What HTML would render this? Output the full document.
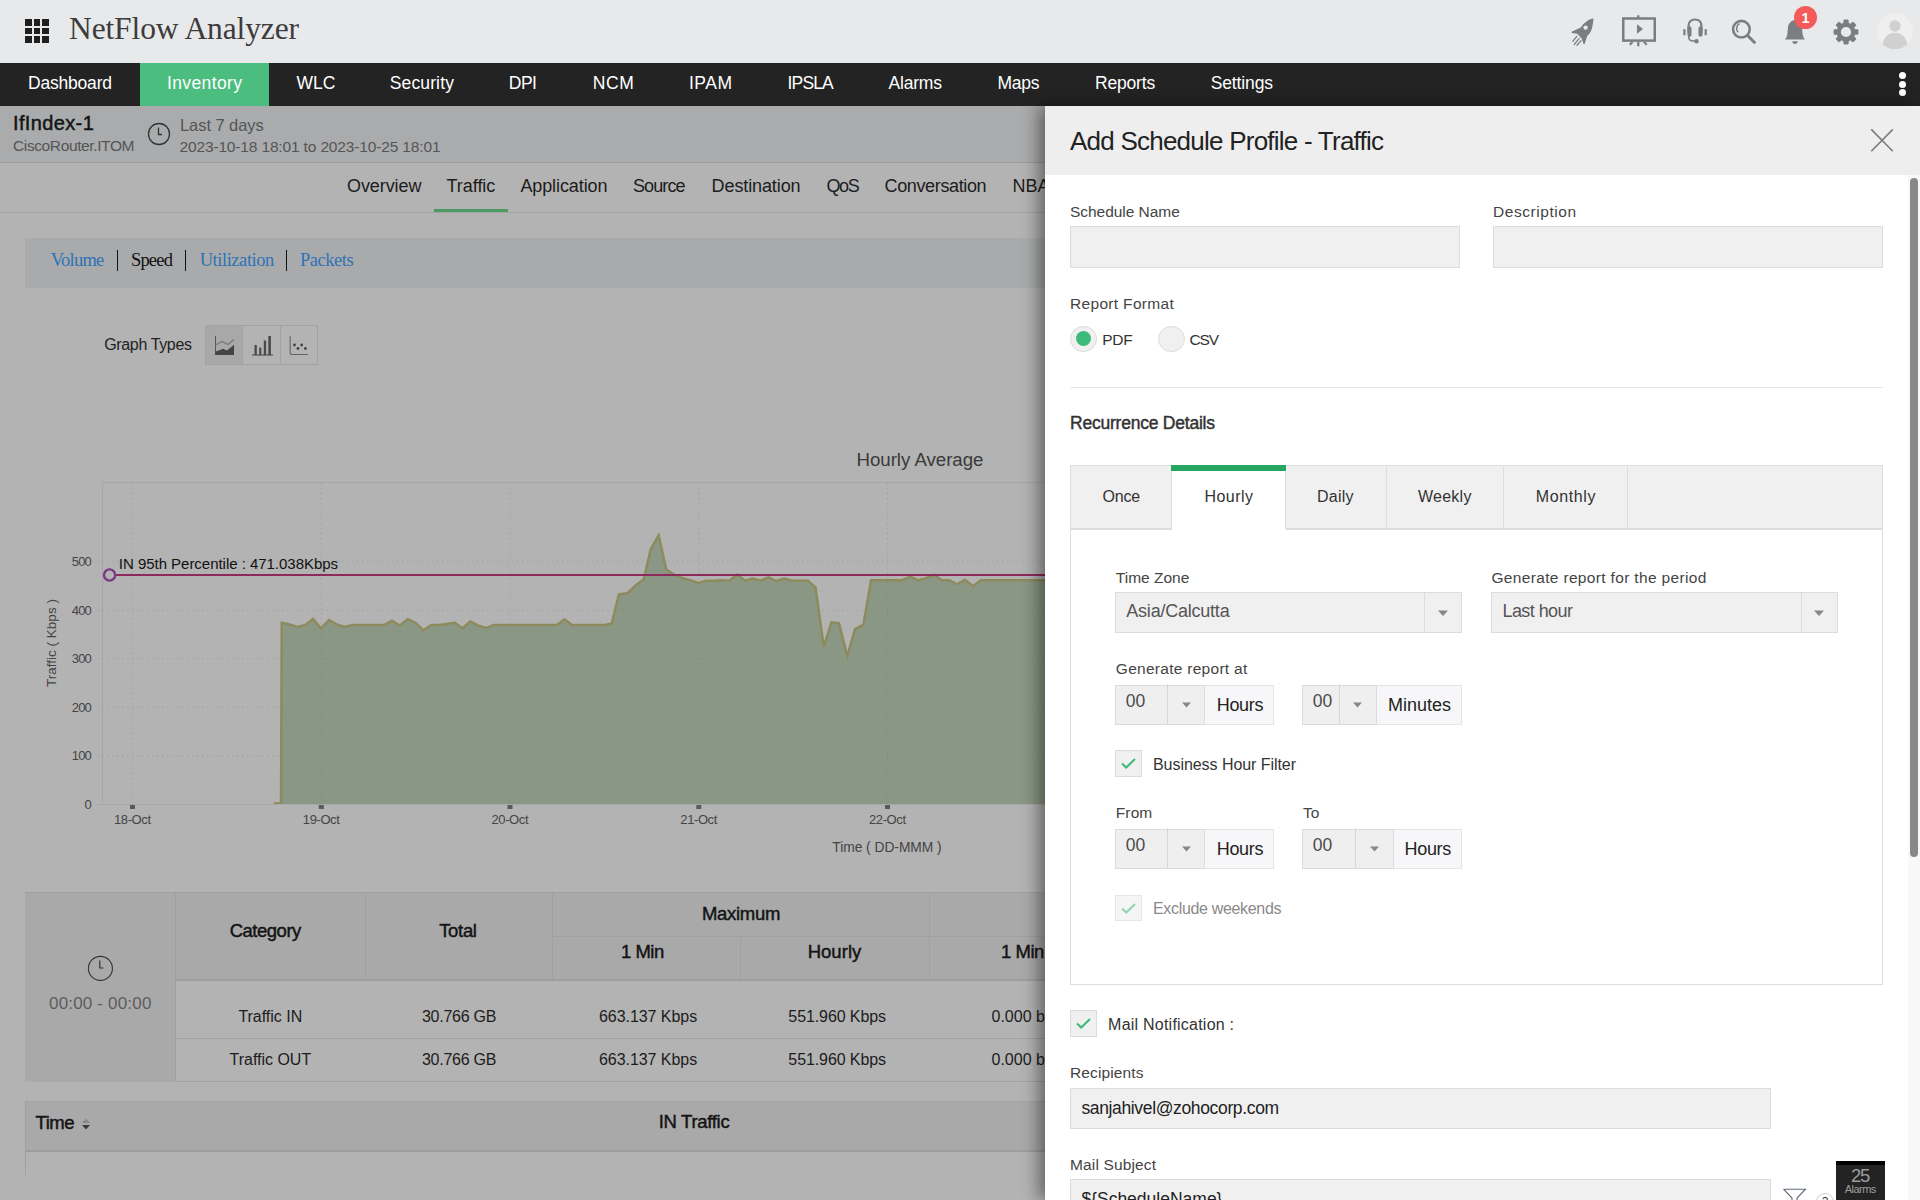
<!DOCTYPE html>
<html><head><meta charset="utf-8"><title>NetFlow Analyzer</title>
<style>
html,body{margin:0;padding:0;width:1920px;height:1200px;overflow:hidden;background:#b3b3b3;}
body{position:relative;font-family:"Liberation Sans", sans-serif;}
.t{position:absolute;white-space:nowrap;line-height:1;}
.r{position:absolute;box-sizing:border-box;}
</style></head><body>
<div class="r" style="left:0px;top:0px;width:1920px;height:63px;background:#e8e9eb;"></div>
<div class="r" style="left:25.0px;top:19.0px;width:6.600000000000001px;height:6.600000000000001px;background:#1f1f1f;"></div>
<div class="r" style="left:25.0px;top:27.6px;width:6.600000000000001px;height:6.600000000000001px;background:#1f1f1f;"></div>
<div class="r" style="left:25.0px;top:36.2px;width:6.600000000000001px;height:6.600000000000001px;background:#1f1f1f;"></div>
<div class="r" style="left:33.6px;top:19.0px;width:6.600000000000001px;height:6.600000000000001px;background:#1f1f1f;"></div>
<div class="r" style="left:33.6px;top:27.6px;width:6.600000000000001px;height:6.600000000000001px;background:#1f1f1f;"></div>
<div class="r" style="left:33.6px;top:36.2px;width:6.600000000000001px;height:6.600000000000001px;background:#1f1f1f;"></div>
<div class="r" style="left:42.2px;top:19.0px;width:6.600000000000001px;height:6.600000000000001px;background:#1f1f1f;"></div>
<div class="r" style="left:42.2px;top:27.6px;width:6.600000000000001px;height:6.600000000000001px;background:#1f1f1f;"></div>
<div class="r" style="left:42.2px;top:36.2px;width:6.600000000000001px;height:6.600000000000001px;background:#1f1f1f;"></div>
<div class="t" style="left:69.00px;top:13.42px;font-size:31.5px;color:#3c3c3c;font-family:'Liberation Serif', serif;letter-spacing:-0.120px;">NetFlow Analyzer</div>
<div class="r" style="left:0px;top:63px;width:1920px;height:43px;background:#232323;"></div>
<div class="r" style="left:140px;top:63px;width:129px;height:43px;background:#4bbd7f;"></div>
<div class="t" style="left:28.00px;top:74.98px;font-size:17.5px;color:#ffffff;letter-spacing:-0.200px;">Dashboard</div>
<div class="t" style="left:167.00px;top:74.98px;font-size:17.5px;color:#ffffff;letter-spacing:0.375px;">Inventory</div>
<div class="t" style="left:296.50px;top:74.98px;font-size:17.5px;color:#ffffff;letter-spacing:0.050px;">WLC</div>
<div class="t" style="left:389.70px;top:74.98px;font-size:17.5px;color:#ffffff;letter-spacing:0.143px;">Security</div>
<div class="t" style="left:508.70px;top:74.98px;font-size:17.5px;color:#ffffff;letter-spacing:-0.450px;">DPI</div>
<div class="t" style="left:592.80px;top:74.98px;font-size:17.5px;color:#ffffff;letter-spacing:0.650px;">NCM</div>
<div class="t" style="left:689.00px;top:74.98px;font-size:17.5px;color:#ffffff;letter-spacing:0.500px;">IPAM</div>
<div class="t" style="left:787.60px;top:74.98px;font-size:17.5px;color:#ffffff;letter-spacing:-0.875px;">IPSLA</div>
<div class="t" style="left:888.40px;top:74.98px;font-size:17.5px;color:#ffffff;letter-spacing:-0.160px;">Alarms</div>
<div class="t" style="left:997.50px;top:74.98px;font-size:17.5px;color:#ffffff;letter-spacing:-0.267px;">Maps</div>
<div class="t" style="left:1095.00px;top:74.98px;font-size:17.5px;color:#ffffff;letter-spacing:-0.183px;">Reports</div>
<div class="t" style="left:1210.70px;top:74.98px;font-size:17.5px;color:#ffffff;letter-spacing:-0.129px;">Settings</div>
<div class="r" style="left:1899.3000000000002px;top:72.30000000000001px;width:7.2px;height:7.2px;border-radius:50%;background:#fff"></div>
<div class="r" style="left:1899.3000000000002px;top:80.5px;width:7.2px;height:7.2px;border-radius:50%;background:#fff"></div>
<div class="r" style="left:1899.3000000000002px;top:89.10000000000001px;width:7.2px;height:7.2px;border-radius:50%;background:#fff"></div>
<div class="r" style="left:0px;top:106px;width:1045px;height:1094px;background:#b3b3b3;"></div>
<div class="r" style="left:0px;top:106px;width:1045px;height:56px;background:#aaabac;"></div>
<div class="r" style="left:0px;top:162px;width:1045px;height:1px;background:#9c9c9c;"></div>
<div class="r" style="left:0px;top:211.5px;width:1045px;height:1.0px;background:#a3a3a3;"></div>
<div class="t" style="left:13.00px;top:113.07px;font-size:20px;color:#141414;-webkit-text-stroke:0.45px #141414;letter-spacing:0.369px;">IfIndex-1</div>
<div class="t" style="left:13.00px;top:138.13px;font-size:15.5px;color:#555;letter-spacing:-0.380px;">CiscoRouter.ITOM</div>
<svg class="r" style="left:147px;top:122px;" width="24" height="24" viewBox="0 0 24 24"><circle cx="12" cy="12" r="10.5" fill="none" stroke="#333" stroke-width="1.3"/><path d="M11.5 5.5 V12.5 H15" fill="none" stroke="#333" stroke-width="1.3"/></svg>
<div class="t" style="left:180.00px;top:116.78px;font-size:16.5px;color:#555;letter-spacing:-0.065px;">Last 7 days</div>
<div class="t" style="left:179.50px;top:138.63px;font-size:15.5px;color:#555;letter-spacing:-0.151px;">2023-10-18 18:01 to 2023-10-25 18:01</div>
<div class="t" style="left:347.00px;top:176.56px;font-size:18px;color:#1c1c1c;letter-spacing:-0.086px;">Overview</div>
<div class="t" style="left:446.60px;top:176.56px;font-size:18px;color:#1c1c1c;letter-spacing:-0.050px;">Traffic</div>
<div class="t" style="left:520.40px;top:176.56px;font-size:18px;color:#1c1c1c;letter-spacing:-0.100px;">Application</div>
<div class="t" style="left:632.90px;top:176.56px;font-size:18px;color:#1c1c1c;letter-spacing:-0.880px;">Source</div>
<div class="t" style="left:711.60px;top:176.56px;font-size:18px;color:#1c1c1c;letter-spacing:-0.110px;">Destination</div>
<div class="t" style="left:826.50px;top:176.56px;font-size:18px;color:#1c1c1c;letter-spacing:-1.400px;">QoS</div>
<div class="t" style="left:884.60px;top:176.56px;font-size:18px;color:#1c1c1c;letter-spacing:-0.373px;">Conversation</div>
<div class="t" style="left:1012.50px;top:176.56px;font-size:18px;color:#1c1c1c;">NBA</div>
<div class="r" style="left:434px;top:209px;width:74px;height:3px;background:#4a9a62;"></div>
<div class="r" style="left:25px;top:238px;width:1020px;height:50px;background:#a9aaab;"></div>
<div class="t" style="left:50.70px;top:250.61px;font-size:18.5px;color:#2f73b6;font-family:'Liberation Serif', serif;letter-spacing:-0.720px;">Volume</div>
<div class="r" style="left:117px;top:250px;width:1.2000000000000028px;height:21px;background:#111;"></div>
<div class="t" style="left:130.90px;top:250.61px;font-size:18.5px;color:#111;font-family:'Liberation Serif', serif;letter-spacing:-0.800px;">Speed</div>
<div class="r" style="left:185.2px;top:250px;width:1.200000000000017px;height:21px;background:#111;"></div>
<div class="t" style="left:199.70px;top:250.61px;font-size:18.5px;color:#2f73b6;font-family:'Liberation Serif', serif;letter-spacing:-0.450px;">Utilization</div>
<div class="r" style="left:286px;top:250px;width:1.1999999999999886px;height:21px;background:#111;"></div>
<div class="t" style="left:300.00px;top:250.61px;font-size:18.5px;color:#2f73b6;font-family:'Liberation Serif', serif;letter-spacing:-0.467px;">Packets</div>
<div class="t" style="left:104.30px;top:336.85px;font-size:16px;color:#222;letter-spacing:-0.370px;">Graph Types</div>
<div class="r" style="left:205px;top:325px;width:113px;height:40px;border:1px solid #a2a2a2;"></div>
<div class="r" style="left:206px;top:326px;width:36.599999999999994px;height:38px;background:#a8a8a8;"></div>
<div class="r" style="left:242px;top:326px;width:1px;height:38px;background:#a2a2a2;"></div>
<div class="r" style="left:280px;top:326px;width:1px;height:38px;background:#a2a2a2;"></div>
<svg class="r" style="left:205px;top:325px;" width="113" height="40" viewBox="0 0 113 40"><path d="M10.5 10.8 V30" stroke="#555" stroke-width="1" fill="none"/><path d="M10.5 20 L17 16.5 L23 19.5 L29 14.5" stroke="#777" stroke-width="1.2" fill="none"/><path d="M10.5 26.5 L15 25 L18 23.8 L22 25.5 L29 19.8 V30 H10.5 Z" fill="#444"/><path d="M47 30 H68" stroke="#555" stroke-width="1.2"/><rect x="49.5" y="20" width="2.3" height="10" fill="#4a4a4a"/><rect x="54.2" y="22.5" width="2.1" height="7.5" fill="#4a4a4a"/><rect x="58.8" y="15.5" width="2.3" height="14.5" fill="#4a4a4a"/><rect x="63.3" y="11" width="2.6" height="19" fill="#4a4a4a"/><path d="M85.2 11 V27.5 Q85.2 29.5 87.2 29.5 H103" stroke="#666" stroke-width="1.1" fill="none"/><circle cx="89.5" cy="20" r="1.4" fill="#444"/><circle cx="93" cy="23.5" r="1.4" fill="#444"/><circle cx="96.7" cy="20" r="1.4" fill="#444"/><circle cx="100.4" cy="23.5" r="1.4" fill="#444"/></svg>
<div class="t" style="left:856.50px;top:450.87px;font-size:18.7px;color:#3a3a3a;letter-spacing:-0.038px;">Hourly Average</div>
<svg class="r" style="left:0px;top:430px;" width="1045" height="440" viewBox="0 0 1045 440"><g transform="translate(0,-430)"><path d="M102.5 804 V482.5 H1045" stroke="#a6a6a6" stroke-width="1" fill="none"/><path d="M97 561.3 H1045" stroke="#a2a2a2" stroke-width="1" stroke-dasharray="1.5 3.5"/><path d="M97 610.3 H1045" stroke="#a2a2a2" stroke-width="1" stroke-dasharray="1.5 3.5"/><path d="M97 658.5 H1045" stroke="#a2a2a2" stroke-width="1" stroke-dasharray="1.5 3.5"/><path d="M97 707.2 H1045" stroke="#a2a2a2" stroke-width="1" stroke-dasharray="1.5 3.5"/><path d="M97 755.8 H1045" stroke="#a2a2a2" stroke-width="1" stroke-dasharray="1.5 3.5"/><path d="M132.5 483 V804" stroke="#a2a2a2" stroke-width="1" stroke-dasharray="1.5 3.5"/><path d="M321.3 483 V804" stroke="#a2a2a2" stroke-width="1" stroke-dasharray="1.5 3.5"/><path d="M510 483 V804" stroke="#a2a2a2" stroke-width="1" stroke-dasharray="1.5 3.5"/><path d="M698.8 483 V804" stroke="#a2a2a2" stroke-width="1" stroke-dasharray="1.5 3.5"/><path d="M887.5 483 V804" stroke="#a2a2a2" stroke-width="1" stroke-dasharray="1.5 3.5"/><path d="M281 804 L281.7 622.7 L289.6 624.5 L297.4 626.8 L305.3 625.0 L313.2 619.0 L321.0 628.5 L328.9 620.0 L336.8 624.4 L344.7 626.8 L352.5 625.0 L360.4 625.0 L368.3 625.0 L376.2 625.0 L384.0 625.0 L391.9 620.6 L399.8 625.6 L407.7 619.2 L415.5 622.7 L423.4 630.3 L431.3 625.0 L439.2 625.0 L447.0 623.9 L454.9 622.7 L462.5 628.2 L470.3 621.5 L478.3 625.6 L486.0 628.0 L493.6 625.0 L556.8 625.0 L564.4 619.2 L572.0 625.0 L604.1 625.0 L611.7 623.6 L618.9 594.4 L627.2 593.3 L635.0 585.9 L643.6 579.5 L650.7 549.2 L658.7 535.2 L666.3 569.6 L674.4 574.8 L682.0 577.8 L690.2 580.1 L698.3 583.0 L706.0 580.7 L713.5 580.7 L721.7 580.1 L729.3 580.7 L737.4 574.6 L745.0 580.7 L752.6 578.6 L760.8 580.7 L768.4 577.4 L776.5 581.0 L784.1 578.6 L792.3 580.7 L808.0 580.7 L815.6 587.7 L823.8 646.6 L831.4 622.3 L839.0 623.1 L847.3 656.0 L855.0 629.1 L863.4 624.6 L871.0 580.3 L901.9 580.3 L910.2 576.5 L918.0 580.3 L925.6 578.4 L934.0 574.6 L941.7 580.3 L949.4 580.3 L957.1 584.2 L964.8 579.7 L973.1 586.1 L980.8 580.3 L1050.0 580.3 L1050 804 Z" fill="#617b55" fill-opacity="0.5"/><path d="M273.7 803.5 L281 803.5 L281.7 622.7 L289.6 624.5 L297.4 626.8 L305.3 625.0 L313.2 619.0 L321.0 628.5 L328.9 620.0 L336.8 624.4 L344.7 626.8 L352.5 625.0 L360.4 625.0 L368.3 625.0 L376.2 625.0 L384.0 625.0 L391.9 620.6 L399.8 625.6 L407.7 619.2 L415.5 622.7 L423.4 630.3 L431.3 625.0 L439.2 625.0 L447.0 623.9 L454.9 622.7 L462.5 628.2 L470.3 621.5 L478.3 625.6 L486.0 628.0 L493.6 625.0 L556.8 625.0 L564.4 619.2 L572.0 625.0 L604.1 625.0 L611.7 623.6 L618.9 594.4 L627.2 593.3 L635.0 585.9 L643.6 579.5 L650.7 549.2 L658.7 535.2 L666.3 569.6 L674.4 574.8 L682.0 577.8 L690.2 580.1 L698.3 583.0 L706.0 580.7 L713.5 580.7 L721.7 580.1 L729.3 580.7 L737.4 574.6 L745.0 580.7 L752.6 578.6 L760.8 580.7 L768.4 577.4 L776.5 581.0 L784.1 578.6 L792.3 580.7 L808.0 580.7 L815.6 587.7 L823.8 646.6 L831.4 622.3 L839.0 623.1 L847.3 656.0 L855.0 629.1 L863.4 624.6 L871.0 580.3 L901.9 580.3 L910.2 576.5 L918.0 580.3 L925.6 578.4 L934.0 574.6 L941.7 580.3 L949.4 580.3 L957.1 584.2 L964.8 579.7 L973.1 586.1 L980.8 580.3 L1050.0 580.3" stroke="#8d8a5b" stroke-width="2.4" fill="none" stroke-linejoin="miter"/><path d="M97 804.5 H1045" stroke="#a8a8a8" stroke-width="1"/><rect x="130.0" y="805" width="5" height="4" fill="#5a5a5a"/><rect x="318.8" y="805" width="5" height="4" fill="#5a5a5a"/><rect x="507.5" y="805" width="5" height="4" fill="#5a5a5a"/><rect x="696.3" y="805" width="5" height="4" fill="#5a5a5a"/><rect x="885.0" y="805" width="5" height="4" fill="#5a5a5a"/><path d="M115 575 H1045" stroke="#8e2a5b" stroke-width="2"/><circle cx="109.6" cy="575" r="5.6" fill="#b3b3b3" stroke="#7d3886" stroke-width="2.4"/></g></svg>
<div class="t" style="left:118.80px;top:556.10px;font-size:15px;color:#111;letter-spacing:-0.029px;">IN 95th Percentile : 471.038Kbps</div>
<div class="t" style="left:71.80px;top:554.99px;font-size:13px;color:#444;letter-spacing:-0.850px;">500</div>
<div class="t" style="left:71.80px;top:603.99px;font-size:13px;color:#444;letter-spacing:-0.850px;">400</div>
<div class="t" style="left:71.80px;top:652.19px;font-size:13px;color:#444;letter-spacing:-0.850px;">300</div>
<div class="t" style="left:71.80px;top:700.89px;font-size:13px;color:#444;letter-spacing:-0.850px;">200</div>
<div class="t" style="left:71.80px;top:749.49px;font-size:13px;color:#444;letter-spacing:-0.850px;">100</div>
<div class="t" style="left:84.60px;top:797.89px;font-size:13px;color:#444;">0</div>
<div class="t" style="left:114.00px;top:813.29px;font-size:13px;color:#444;letter-spacing:-0.400px;">18-Oct</div>
<div class="t" style="left:302.80px;top:813.29px;font-size:13px;color:#444;letter-spacing:-0.400px;">19-Oct</div>
<div class="t" style="left:491.50px;top:813.29px;font-size:13px;color:#444;letter-spacing:-0.400px;">20-Oct</div>
<div class="t" style="left:680.30px;top:813.29px;font-size:13px;color:#444;letter-spacing:-0.400px;">21-Oct</div>
<div class="t" style="left:869.00px;top:813.29px;font-size:13px;color:#444;letter-spacing:-0.400px;">22-Oct</div>
<div class="t" style="left:832.25px;top:840.92px;font-size:13.8px;color:#444;letter-spacing:-0.029px;">Time ( DD-MMM )</div>
<div class="t" style="left:51.5px;top:643px;font-size:13.5px;color:#444;transform:translate(-50%,-50%) rotate(-90deg);transform-origin:center;">Traffic ( Kbps )</div>
<div class="r" style="left:25px;top:892px;width:1020px;height:190px;background:#b3b3b3;"></div>
<div class="r" style="left:25px;top:892px;width:150.5px;height:190px;background:#a9a9aa;"></div>
<div class="r" style="left:175.5px;top:892px;width:869.5px;height:88px;background:#a9a9aa;"></div>
<div class="r" style="left:25px;top:892px;width:1020px;height:1px;background:#a0a0a0;"></div>
<div class="r" style="left:175px;top:892px;width:1px;height:190px;background:#a0a0a0;"></div>
<div class="r" style="left:364.5px;top:892px;width:1.0px;height:88px;background:#a0a0a0;"></div>
<div class="r" style="left:552px;top:892px;width:1px;height:88px;background:#a0a0a0;"></div>
<div class="r" style="left:552px;top:936px;width:493px;height:1px;background:#a0a0a0;"></div>
<div class="r" style="left:740px;top:937px;width:1px;height:43px;background:#a0a0a0;"></div>
<div class="r" style="left:929px;top:892px;width:1px;height:88px;background:#a0a0a0;"></div>
<div class="r" style="left:175px;top:979px;width:870px;height:2px;background:#9d9d9d;"></div>
<div class="r" style="left:175px;top:1038px;width:870px;height:1px;background:#a0a0a0;"></div>
<div class="r" style="left:175px;top:1081px;width:870px;height:1px;background:#a0a0a0;"></div>
<svg class="r" style="left:87px;top:955px;" width="27" height="27" viewBox="0 0 27 27"><circle cx="13.4" cy="13.4" r="12" fill="none" stroke="#333" stroke-width="1.1"/><path d="M12.8 5.5 V13 H16.5" fill="none" stroke="#333" stroke-width="1.2"/></svg>
<div class="t" style="left:49.05px;top:995.01px;font-size:17px;color:#5d5d5d;letter-spacing:0.175px;">00:00 - 00:00</div>
<div class="t" style="left:229.65px;top:921.54px;font-size:18.5px;color:#141414;-webkit-text-stroke:0.45px #141414;letter-spacing:-0.486px;">Category</div>
<div class="t" style="left:439.20px;top:922.24px;font-size:18.5px;color:#141414;-webkit-text-stroke:0.45px #141414;letter-spacing:-0.325px;">Total</div>
<div class="t" style="left:702.00px;top:904.84px;font-size:18.5px;color:#141414;-webkit-text-stroke:0.45px #141414;letter-spacing:-0.300px;">Maximum</div>
<div class="t" style="left:620.95px;top:943.34px;font-size:18.5px;color:#141414;-webkit-text-stroke:0.45px #141414;letter-spacing:-0.475px;">1 Min</div>
<div class="t" style="left:807.65px;top:943.34px;font-size:18.5px;color:#141414;-webkit-text-stroke:0.45px #141414;letter-spacing:0.040px;">Hourly</div>
<div class="t" style="left:1001.00px;top:943.34px;font-size:18.5px;color:#141414;-webkit-text-stroke:0.45px #141414;letter-spacing:-0.475px;">1 Min</div>
<div class="t" style="left:238.40px;top:1009.35px;font-size:16px;color:#1c1c1c;letter-spacing:-0.022px;">Traffic IN</div>
<div class="t" style="left:421.95px;top:1009.35px;font-size:16px;color:#1c1c1c;letter-spacing:-0.250px;">30.766 GB</div>
<div class="t" style="left:599.00px;top:1009.35px;font-size:16px;color:#1c1c1c;letter-spacing:-0.055px;">663.137 Kbps</div>
<div class="t" style="left:788.35px;top:1009.35px;font-size:16px;color:#1c1c1c;letter-spacing:-0.100px;">551.960 Kbps</div>
<div class="t" style="left:991.50px;top:1009.35px;font-size:16px;color:#1c1c1c;">0.000 bps</div>
<div class="t" style="left:229.60px;top:1052.25px;font-size:16px;color:#1c1c1c;letter-spacing:-0.020px;">Traffic OUT</div>
<div class="t" style="left:421.95px;top:1052.25px;font-size:16px;color:#1c1c1c;letter-spacing:-0.250px;">30.766 GB</div>
<div class="t" style="left:599.00px;top:1052.25px;font-size:16px;color:#1c1c1c;letter-spacing:-0.055px;">663.137 Kbps</div>
<div class="t" style="left:788.35px;top:1052.25px;font-size:16px;color:#1c1c1c;letter-spacing:-0.100px;">551.960 Kbps</div>
<div class="t" style="left:991.50px;top:1052.25px;font-size:16px;color:#1c1c1c;">0.000 bps</div>
<div class="r" style="left:25px;top:1101px;width:1020px;height:51px;background:#a9a9aa;"></div>
<div class="r" style="left:25px;top:1101px;width:1020px;height:1px;background:#a3a3a3;"></div>
<div class="r" style="left:25px;top:1150px;width:1020px;height:2px;background:#9d9d9d;"></div>
<div class="r" style="left:25px;top:1101px;width:1px;height:74px;background:#a0a0a0;"></div>
<div class="t" style="left:35.50px;top:1114.34px;font-size:18.5px;color:#141414;-webkit-text-stroke:0.45px #141414;letter-spacing:-0.467px;">Time</div>
<svg class="r" style="left:80px;top:1117px;" width="12" height="14" viewBox="0 0 12 14"><path d="M2 6 L6 1.5 L10 6 Z" fill="#8a8a8a"/><path d="M2 8 L6 12.5 L10 8 Z" fill="#3a3a3a"/></svg>
<div class="t" style="left:658.75px;top:1113.14px;font-size:18.5px;color:#141414;-webkit-text-stroke:0.45px #141414;letter-spacing:-0.311px;">IN Traffic</div>
<div class="r" style="left:1045px;top:106px;width:875px;height:1094px;background:#fff;box-shadow:-6px 0 16px rgba(0,0,0,0.45);"></div>
<div class="r" style="left:1045px;top:106px;width:875px;height:69px;background:#eeeeee;"></div>
<div class="t" style="left:1070.00px;top:127.99px;font-size:26px;color:#222;letter-spacing:-0.766px;">Add Schedule Profile - Traffic</div>
<svg class="r" style="left:1868px;top:126px;" width="28" height="28" viewBox="0 0 28 28"><path d="M3.3 3.4 L24.8 25.2 M24.8 3.4 L3.3 25.2" stroke="#7b7b7b" stroke-width="1.6" fill="none"/></svg>
<div class="r" style="left:1908px;top:175px;width:12px;height:1025px;background:#f8f8f8;"></div>
<div class="r" style="left:1910px;top:178px;width:8px;height:679px;background:#888888;border-radius:4px;"></div>
<div class="t" style="left:1070.00px;top:203.78px;font-size:15.5px;color:#444;letter-spacing:-0.042px;">Schedule Name</div>
<div class="t" style="left:1493.00px;top:203.78px;font-size:15.5px;color:#444;letter-spacing:0.550px;">Description</div>
<div class="r" style="left:1070px;top:226px;width:390px;height:42px;background:#f0f0f0;border:1px solid #dcdcdc;"></div>
<div class="r" style="left:1493px;top:226px;width:390px;height:42px;background:#f0f0f0;border:1px solid #dcdcdc;"></div>
<div class="t" style="left:1070.00px;top:295.58px;font-size:15.5px;color:#444;letter-spacing:0.325px;">Report Format</div>
<div class="r" style="left:1070px;top:325.5px;width:26.6px;height:26.6px;border-radius:50%;background:#f0f0f0;border:1px solid #dcdcdc;"></div>
<div class="r" style="left:1076px;top:331px;width:15.3px;height:15.3px;border-radius:50%;background:#3dbb7b;"></div>
<div class="t" style="left:1102.20px;top:331.58px;font-size:15.5px;color:#333;letter-spacing:-0.250px;">PDF</div>
<div class="r" style="left:1158px;top:325.5px;width:26.6px;height:26.6px;border-radius:50%;background:#f0f0f0;border:1px solid #dcdcdc;"></div>
<div class="t" style="left:1189.60px;top:331.58px;font-size:15.5px;color:#333;letter-spacing:-1.200px;">CSV</div>
<div class="r" style="left:1070px;top:387px;width:813px;height:1px;background:#e6e6e6;"></div>
<div class="t" style="left:1070.00px;top:415.38px;font-size:17.5px;color:#333;-webkit-text-stroke:0.45px #333;letter-spacing:-0.224px;">Recurrence Details</div>
<div class="r" style="left:1070px;top:529px;width:813px;height:456px;background:#ffffff;border:1px solid #dddddd;border-top:none;"></div>
<div class="r" style="left:1070px;top:465px;width:813px;height:65px;background:#f0f0f0;border:1px solid #dddddd;"></div>
<div class="r" style="left:1070px;top:528px;width:813px;height:2px;background:#dddddd;"></div>
<div class="r" style="left:1172px;top:465px;width:114px;height:66px;background:#ffffff;"></div>
<div class="r" style="left:1171px;top:465px;width:1px;height:64px;background:#dddddd;"></div>
<div class="r" style="left:1285px;top:465px;width:1px;height:64px;background:#dddddd;"></div>
<div class="r" style="left:1171px;top:465px;width:115px;height:6px;background:#27a563;"></div>
<div class="r" style="left:1385.5px;top:466px;width:1.0px;height:63px;background:#dddddd;"></div>
<div class="r" style="left:1503.4px;top:466px;width:1.0px;height:63px;background:#dddddd;"></div>
<div class="r" style="left:1627.4px;top:466px;width:1.0px;height:63px;background:#dddddd;"></div>
<div class="t" style="left:1102.50px;top:489.35px;font-size:16px;color:#333;letter-spacing:-0.233px;">Once</div>
<div class="t" style="left:1204.50px;top:489.35px;font-size:16px;color:#333;letter-spacing:0.440px;">Hourly</div>
<div class="t" style="left:1317.00px;top:489.35px;font-size:16px;color:#333;letter-spacing:0.250px;">Daily</div>
<div class="t" style="left:1417.90px;top:489.35px;font-size:16px;color:#333;letter-spacing:0.280px;">Weekly</div>
<div class="t" style="left:1535.70px;top:489.35px;font-size:16px;color:#333;letter-spacing:0.633px;">Monthly</div>
<div class="t" style="left:1115.80px;top:570.08px;font-size:15.5px;color:#444;">Time Zone</div>
<div class="t" style="left:1491.40px;top:570.08px;font-size:15.5px;color:#444;letter-spacing:0.341px;">Generate report for the period</div>
<div class="r" style="left:1115px;top:592px;width:347px;height:41px;background:#f0f0f0;border:1px solid #dcdcdc;"></div>
<div class="r" style="left:1424.4px;top:593px;width:1.0px;height:39px;background:#dcdcdc;"></div>
<svg class="r" style="left:1437.2px;top:608.5px;" width="12" height="8" viewBox="0 0 12 8"><path d="M1 1.5 H11 L6 7 Z" fill="#888"/></svg>
<div class="t" style="left:1126.30px;top:601.66px;font-size:18px;color:#555;letter-spacing:-0.225px;">Asia/Calcutta</div>
<div class="r" style="left:1491px;top:592px;width:347px;height:41px;background:#f0f0f0;border:1px solid #dcdcdc;"></div>
<div class="r" style="left:1800.5px;top:593px;width:1.0px;height:39px;background:#dcdcdc;"></div>
<svg class="r" style="left:1813.25px;top:608.5px;" width="12" height="8" viewBox="0 0 12 8"><path d="M1 1.5 H11 L6 7 Z" fill="#888"/></svg>
<div class="t" style="left:1502.50px;top:601.66px;font-size:18px;color:#555;letter-spacing:-0.575px;">Last hour</div>
<div class="t" style="left:1115.80px;top:661.18px;font-size:15.5px;color:#444;letter-spacing:0.282px;">Generate report at</div>
<div class="r" style="left:1115px;top:684.5px;width:159px;height:40.0px;background:#f7f7f9;border:1px solid #e4e4e4;"></div>
<div class="r" style="left:1115px;top:684.5px;width:90px;height:40.0px;background:#efefef;border:1px solid #dcdcdc;"></div>
<div class="r" style="left:1167.3px;top:683.5px;width:1.0px;height:40.0px;background:#d6d6d6;"></div>
<svg class="r" style="left:1180.65px;top:700.5px;" width="11" height="8" viewBox="0 0 11 8"><path d="M1 1.5 H10 L5.5 6.5 Z" fill="#888"/></svg>
<div class="t" style="left:1125.70px;top:693.38px;font-size:17.5px;color:#4a4a4a;">00</div>
<div class="t" style="left:1216.80px;top:696.26px;font-size:18px;color:#222;letter-spacing:-0.350px;">Hours</div>
<div class="r" style="left:1302px;top:684.5px;width:160px;height:40.0px;background:#f7f7f9;border:1px solid #e4e4e4;"></div>
<div class="r" style="left:1302px;top:684.5px;width:75.20000000000005px;height:40.0px;background:#efefef;border:1px solid #dcdcdc;"></div>
<div class="r" style="left:1338.6px;top:683.5px;width:1.0px;height:40.0px;background:#d6d6d6;"></div>
<svg class="r" style="left:1352.4px;top:700.5px;" width="11" height="8" viewBox="0 0 11 8"><path d="M1 1.5 H10 L5.5 6.5 Z" fill="#888"/></svg>
<div class="t" style="left:1312.70px;top:693.38px;font-size:17.5px;color:#4a4a4a;">00</div>
<div class="t" style="left:1388.00px;top:696.26px;font-size:18px;color:#222;letter-spacing:-0.017px;">Minutes</div>
<div class="r" style="left:1115px;top:750.3px;width:26.5px;height:26.5px;background:#f0f0f0;border:1px solid #dcdcdc;"></div>
<svg class="r" style="left:1120px;top:756.3px;" width="17" height="14" viewBox="0 0 17 14"><path d="M2 7.5 L6.2 11.5 L15 3" stroke="#3cb878" stroke-width="2" fill="none"/></svg>
<div class="t" style="left:1153.00px;top:756.55px;font-size:16px;color:#333;letter-spacing:-0.053px;">Business Hour Filter</div>
<div class="t" style="left:1115.80px;top:805.08px;font-size:15.5px;color:#444;letter-spacing:0.100px;">From</div>
<div class="t" style="left:1303.00px;top:805.08px;font-size:15.5px;color:#444;letter-spacing:0.100px;">To</div>
<div class="r" style="left:1115px;top:828.5px;width:159px;height:40.200000000000045px;background:#f7f7f9;border:1px solid #e4e4e4;"></div>
<div class="r" style="left:1115px;top:828.5px;width:90px;height:40.200000000000045px;background:#efefef;border:1px solid #dcdcdc;"></div>
<div class="r" style="left:1167.3px;top:827.5px;width:1.0px;height:40.200000000000045px;background:#d6d6d6;"></div>
<svg class="r" style="left:1180.65px;top:844.6px;" width="11" height="8" viewBox="0 0 11 8"><path d="M1 1.5 H10 L5.5 6.5 Z" fill="#888"/></svg>
<div class="t" style="left:1125.70px;top:837.38px;font-size:17.5px;color:#4a4a4a;">00</div>
<div class="t" style="left:1216.80px;top:840.26px;font-size:18px;color:#222;letter-spacing:-0.350px;">Hours</div>
<div class="r" style="left:1302px;top:828.5px;width:160px;height:40.200000000000045px;background:#f7f7f9;border:1px solid #e4e4e4;"></div>
<div class="r" style="left:1302px;top:828.5px;width:91.5px;height:40.200000000000045px;background:#efefef;border:1px solid #dcdcdc;"></div>
<div class="r" style="left:1354.5px;top:827.5px;width:1.0px;height:40.200000000000045px;background:#d6d6d6;"></div>
<svg class="r" style="left:1368.5px;top:844.6px;" width="11" height="8" viewBox="0 0 11 8"><path d="M1 1.5 H10 L5.5 6.5 Z" fill="#888"/></svg>
<div class="t" style="left:1312.70px;top:837.38px;font-size:17.5px;color:#4a4a4a;">00</div>
<div class="t" style="left:1404.60px;top:840.26px;font-size:18px;color:#222;letter-spacing:-0.350px;">Hours</div>
<div class="r" style="left:1115px;top:894.5px;width:26.5px;height:26.5px;background:#f5f5f5;border:1px solid #e6e6e6;"></div>
<svg class="r" style="left:1120px;top:900.5px;" width="17" height="14" viewBox="0 0 17 14"><path d="M2 7.5 L6.2 11.5 L15 3" stroke="#8fd6ae" stroke-width="2" fill="none"/></svg>
<div class="t" style="left:1153.00px;top:900.95px;font-size:16px;color:#8a8a8a;letter-spacing:-0.327px;">Exclude weekends</div>
<div class="r" style="left:1070px;top:1010.2px;width:26.5px;height:26.5px;background:#f0f0f0;border:1px solid #dcdcdc;"></div>
<svg class="r" style="left:1075px;top:1016.2px;" width="17" height="14" viewBox="0 0 17 14"><path d="M2 7.5 L6.2 11.5 L15 3" stroke="#3cb878" stroke-width="2" fill="none"/></svg>
<div class="t" style="left:1108.10px;top:1016.75px;font-size:16px;color:#333;letter-spacing:0.228px;">Mail Notification :</div>
<div class="t" style="left:1070.00px;top:1064.78px;font-size:15.5px;color:#444;letter-spacing:0.122px;">Recipients</div>
<div class="r" style="left:1070px;top:1088.4px;width:701px;height:40.19999999999982px;background:#f0f0f0;border:1px solid #dcdcdc;"></div>
<div class="t" style="left:1081.40px;top:1099.98px;font-size:17.5px;color:#222;letter-spacing:-0.355px;">sanjahivel@zohocorp.com</div>
<div class="t" style="left:1070.00px;top:1156.78px;font-size:15.5px;color:#444;letter-spacing:0.145px;">Mail Subject</div>
<div class="r" style="left:1070px;top:1179.2px;width:701px;height:50.799999999999955px;background:#f0f0f0;border:1px solid #dcdcdc;"></div>
<div class="t" style="left:1081.40px;top:1191.18px;font-size:17.5px;color:#222;">${ScheduleName}</div>
<svg class="r" style="left:1782px;top:1188px;" width="26" height="14" viewBox="0 0 26 14"><path d="M1.5 1.2 H23.5 L15 10 V14 M1.5 1.2 L10 10 V14" stroke="#5f6b78" stroke-width="1.1" fill="none"/></svg>
<div class="r" style="left:1816px;top:1193px;width:18px;height:18px;border-radius:50%;border:1px solid #ccc;background:#fff;"></div>
<div class="t" style="left:1821.95px;top:1196.19px;font-size:11px;color:#333;">?</div>
<div class="r" style="left:1836px;top:1161px;width:49px;height:39px;background:#232323;"></div>
<div class="r" style="left:1836px;top:1161px;width:49px;height:4px;background:#000;"></div>
<div class="t" style="left:1850.95px;top:1167.34px;font-size:18.5px;color:#9d9d9d;letter-spacing:-1.300px;">25</div>
<div class="t" style="left:1844.75px;top:1184.49px;font-size:11px;color:#9d9d9d;letter-spacing:-0.540px;">Alarms</div>
<svg class="r" style="left:1566px;top:14px;" width="32" height="34" viewBox="0 0 32 34"><path d="M27.4 4.3 C22 5.6 17.6 9 14.8 13.4 L6.2 17.4 C5.3 17.9 5.2 18.6 6 18.9 L11.3 19.8 L15.6 24.4 L17.4 29.6 C17.7 30.4 18.4 30.3 18.8 29.5 L21.3 21.8 C25.2 18.6 27 13.2 27.4 4.3 Z" fill="#7b7e81"/><circle cx="19.6" cy="13.6" r="2.2" fill="#e8e9eb"/><path d="M10.8 22.3 L6.8 27.3 M13 24.6 L8.2 30.6 M15 26.6 L11 31.2" stroke="#7b7e81" stroke-width="1.3" stroke-linecap="round"/></svg>
<svg class="r" style="left:1620px;top:13px;" width="38" height="36" viewBox="0 0 38 36"><rect x="3.25" y="5.5" width="31.5" height="22.1" fill="none" stroke="#7b7e81" stroke-width="2.5"/><path d="M18.3 2.2 V5 M18.3 28.5 V33.3 M12.5 29 L9.8 31.8 M24 29 L26.8 31.8" stroke="#7b7e81" stroke-width="2.2"/><path d="M17 11.2 V20.8 L23 16 Z" fill="#7b7e81"/></svg>
<svg class="r" style="left:1680px;top:16px;" width="30" height="30" viewBox="0 0 30 30"><path d="M8.5 17 V10.5 C8.5 5.8 11 3.5 15 3.5 C19 3.5 21.5 5.8 21.5 10.5 V17" stroke="#7b7e81" stroke-width="2.2" fill="none"/><rect x="7.5" y="10.5" width="4" height="10" rx="1.5" fill="#7b7e81"/><rect x="18.5" y="10.5" width="4" height="10" rx="1.5" fill="#7b7e81"/><rect x="3.3" y="13.2" width="2.2" height="6" fill="#7b7e81"/><rect x="24.6" y="13.2" width="2.2" height="6" fill="#7b7e81"/><path d="M8.8 18 V21 C8.8 23.5 10.5 25 13 25 H16" stroke="#7b7e81" stroke-width="1.6" fill="none"/><circle cx="16.5" cy="25.2" r="2.2" fill="#7b7e81"/></svg>
<svg class="r" style="left:1728px;top:16px;" width="32" height="32" viewBox="0 0 32 32"><circle cx="13.4" cy="13.2" r="8.3" stroke="#7b7e81" stroke-width="2.6" fill="none"/><path d="M19.5 19.5 L27.3 27.2" stroke="#7b7e81" stroke-width="3" stroke-linecap="butt"/><path d="M11.5 7.6 C8.6 9 7.6 13.5 10 16.3" stroke="#7b7e81" stroke-width="1.5" fill="none"/></svg>
<svg class="r" style="left:1782px;top:16px;" width="28" height="30" viewBox="0 0 28 30"><path d="M3 23.5 C5.5 21 5.5 17.5 5.8 13 C6.2 7.5 9 4.5 13 4 C17 4.5 19.8 7.5 20.2 13 C20.5 17.5 20.5 21 23 23.5 Z" fill="#7b7e81"/><path d="M10.3 25.2 H15.7 C15.7 27 14.5 28 13 28 C11.5 28 10.3 27 10.3 25.2 Z" fill="#7b7e81"/></svg>
<div class="r" style="left:1794.1px;top:6px;width:23px;height:23px;border-radius:50%;background:#f55a5a;"></div>
<div class="t" style="left:1801.55px;top:11.02px;font-size:14.5px;color:#fff;font-weight:bold;">1</div>
<svg class="r" style="left:1832.5px;top:18.5px;" width="26" height="26" viewBox="0 0 26 26"><rect x="10.3" y="0.6" width="5.4" height="6" rx="1.3" fill="#7b7e81" transform="rotate(0 13 13)"/><rect x="10.3" y="0.6" width="5.4" height="6" rx="1.3" fill="#7b7e81" transform="rotate(45 13 13)"/><rect x="10.3" y="0.6" width="5.4" height="6" rx="1.3" fill="#7b7e81" transform="rotate(90 13 13)"/><rect x="10.3" y="0.6" width="5.4" height="6" rx="1.3" fill="#7b7e81" transform="rotate(135 13 13)"/><rect x="10.3" y="0.6" width="5.4" height="6" rx="1.3" fill="#7b7e81" transform="rotate(180 13 13)"/><rect x="10.3" y="0.6" width="5.4" height="6" rx="1.3" fill="#7b7e81" transform="rotate(225 13 13)"/><rect x="10.3" y="0.6" width="5.4" height="6" rx="1.3" fill="#7b7e81" transform="rotate(270 13 13)"/><rect x="10.3" y="0.6" width="5.4" height="6" rx="1.3" fill="#7b7e81" transform="rotate(315 13 13)"/><circle cx="13" cy="13" r="9.4" fill="#7b7e81"/><circle cx="13" cy="13" r="5.1" fill="#e8e9eb"/></svg>
<svg class="r" style="left:1876px;top:13px;" width="38" height="38" viewBox="0 0 38 38"><defs><clipPath id="cav"><circle cx="19" cy="18.25" r="18"/></clipPath></defs><circle cx="19" cy="18.25" r="18" fill="#efefef"/><g clip-path="url(#cav)"><circle cx="19" cy="13" r="5.7" fill="#d0d0d0"/><path d="M6 36 C6.5 25 11.5 19.8 19 19.8 C26.5 19.8 31.5 25 32 36 Z" fill="#d0d0d0"/></g></svg>
</body></html>
